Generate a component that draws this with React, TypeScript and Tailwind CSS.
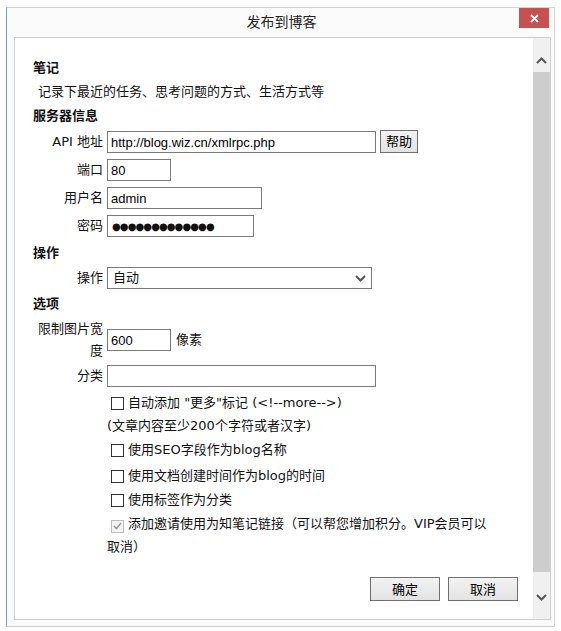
import type { ReactNode } from 'react';

const font = "font-['DejaVu_Sans','Noto_Sans_CJK_SC',sans-serif]";
const inputFont = "font-['Liberation_Sans','Noto_Sans_CJK_SC',sans-serif]";

function Chevron({ up = false }: { up?: boolean }) {
  return (
    <svg width="11" height="7" viewBox="0 0 11 7" className="block">
      <path
        d={up ? 'M1 6 L5.5 1.5 L10 6' : 'M1 1 L5.5 5.5 L10 1'}
        fill="none"
        stroke="#555"
        strokeWidth="2"
      />
    </svg>
  );
}

function Field({ label, children }: { label: ReactNode; children: ReactNode }) {
  return (
    <div className="flex items-center min-h-[28px]">
      <div className="w-[70px] mr-[4px] text-right leading-[22px] shrink-0">{label}</div>
      {children}
    </div>
  );
}

function TextBox({ value, className }: { value: string; className: string }) {
  return (
    <input
      readOnly
      value={value}
      className={`h-[22px] border border-[#7a7a7a] bg-white px-[3px] text-[13px] text-black outline-none ${inputFont} ${className}`}
    />
  );
}

function Check({ checked = false }: { checked?: boolean }) {
  if (checked) {
    return (
      <span className="inline-flex items-center justify-center w-[13px] h-[13px] border border-[#bcbcbc] bg-[#f4f4f4] align-[-2px] mr-[4px]">
        <svg width="9" height="8" viewBox="0 0 9 8">
          <path d="M1 4 L3.5 6.5 L8 1" fill="none" stroke="#9a9a9a" strokeWidth="1.6" />
        </svg>
      </span>
    );
  }
  return (
    <span className="inline-block w-[13px] h-[13px] border border-[#333] bg-white align-[-2px] mr-[4px]" />
  );
}

function Heading({ children, className = '' }: { children: ReactNode; className?: string }) {
  return <div className={`flex items-center font-bold ${className}`}>{children}</div>;
}

function Button({ children, className = '' }: { children: ReactNode; className?: string }) {
  return (
    <button
      type="button"
      className={`border border-[#707070] bg-gradient-to-b from-[#f2f2f2] to-[#e3e3e3] text-[13px] text-black leading-none ${className}`}
    >
      {children}
    </button>
  );
}

export default function App() {
  return (
    <div className={`min-h-[631px] bg-white pt-[7px] pl-[6px] text-[13px] text-[#111] ${font}`}>
      <div className="w-[549px] h-[620px] bg-[#fbfbfb] border border-[#d3d3d3] border-l-[#7b9cc0] flex flex-col">
        {/* title bar */}
        <div className="h-[29px] grid grid-cols-[1fr_auto_1fr] items-start shrink-0">
          <div />
          <div className="pl-[2px] pt-[4px] text-[14px] leading-[20px] text-[#222]">发布到博客</div>
          <div className="flex justify-end pr-[5px]">
            <div className="w-[30px] h-[20px] bg-[#c75050] flex items-center justify-center">
              <svg width="9" height="9" viewBox="0 0 9 9">
                <path d="M1 1 L8 8 M8 1 L1 8" stroke="#fff" strokeWidth="1.8" />
              </svg>
            </div>
          </div>
        </div>

        {/* client panel */}
        <div className="ml-[7px] w-[537px] h-[583px] border border-[#cfcfcf] bg-white flex shrink-0">
          <div className="flex-1 flex flex-col pl-[18px] pt-[18px] pr-[15px]">
            <Heading className="h-[24px]">笔记</Heading>
            <div className="h-[24px] flex items-center pl-[5px]">记录下最近的任务、思考问题的方式、生活方式等</div>
            <Heading className="h-[24px]">服务器信息</Heading>

            <Field label="API 地址">
              <TextBox value="http://blog.wiz.cn/xmlrpc.php" className="w-[269px]" />
              <Button className="ml-[4px] w-[38px] h-[23px] -mt-[2px]">帮助</Button>
            </Field>
            <Field label="端口">
              <TextBox value="80" className="w-[64px]" />
            </Field>
            <Field label="用户名">
              <TextBox value="admin" className="w-[155px]" />
            </Field>
            <Field label="密码">
              <div className="w-[147px] h-[22px] border border-[#7a7a7a] bg-white px-[4px] flex items-center text-[10px] tracking-[-0.9px] text-[#111]">
                ●●●●●●●●●●●●●
              </div>
            </Field>

            <Heading className="h-[26px]">操作</Heading>
            <div className="flex items-center h-[24px]">
              <div className="w-[70px] mr-[4px] text-right">操作</div>
              <div className="w-[265px] h-[22px] border border-[#7a7a7a] bg-white pl-[5px] pr-[5px] flex items-center justify-between">
                <span>自动</span>
                <Chevron />
              </div>
            </div>

            <Heading className="h-[28px]">选项</Heading>
            <Field label="限制图片宽度">
              <TextBox value="600" className="w-[64px]" />
              <span className="ml-[5px]">像素</span>
            </Field>
            <Field label="分类">
              <TextBox value="" className="w-[269px]" />
            </Field>

            <div className="pl-[74px]">
              <div className="h-[26px] flex items-center pl-[4px]">
                <Check />
                <span>自动添加 "更多"标记 (&lt;!--more--&gt;)</span>
              </div>
              <div className="h-[20px] flex items-center">(文章内容至少200个字符或者汉字)</div>
              <div className="h-[28px] flex items-center pl-[4px]">
                <Check />
                <span>使用SEO字段作为blog名称</span>
              </div>
              <div className="h-[24px] flex items-center pl-[4px]">
                <Check />
                <span>使用文档创建时间作为blog的时间</span>
              </div>
              <div className="h-[24px] flex items-center pl-[4px]">
                <Check />
                <span>使用标签作为分类</span>
              </div>
              <div className="leading-[23px]">
                <span className="pl-[4px]">
                  <Check checked />
                </span>
                添加邀请使用为知笔记链接（可以帮您增加积分。VIP会员可以
                <br />
                取消）
              </div>
            </div>

            <div className="mt-[19px] flex justify-end gap-[8px]">
              <Button className="w-[70px] h-[24px]">确定</Button>
              <Button className="w-[70px] h-[24px]">取消</Button>
            </div>
          </div>

          {/* scrollbar */}
          <div className="w-[17px] bg-[#f0f0f0] flex flex-col">
            <div className="h-[34px] flex items-end justify-center pb-[8px]">
              <Chevron up />
            </div>
            <div className="h-[500px] bg-[#cdcdcd]" />
            <div className="flex-1 flex justify-center pt-[22px]">
              <Chevron />
            </div>
          </div>
        </div>
      </div>
    </div>
  );
}
